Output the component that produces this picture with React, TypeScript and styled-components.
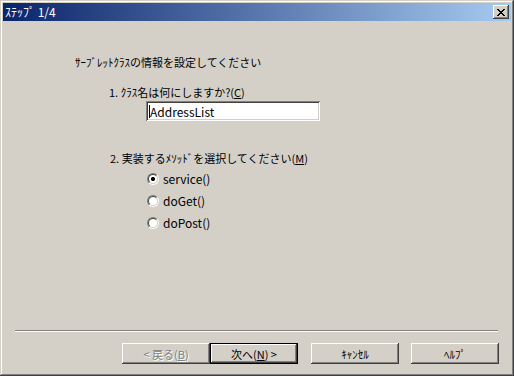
import React from "react"
import styled, { createGlobalStyle } from "styled-components"

const GlobalStyle = createGlobalStyle`
  html, body {
    margin: 0;
    padding: 0;
    background: #d4d0c8;
  }
  body {
    font-family: "Noto Sans CJK JP", "Noto Sans", sans-serif;
  }
`

const Window = styled.div`
  width: 514px;
  height: 376px;
  box-sizing: border-box;
  padding: 3px;
  display: flex;
  flex-direction: column;
  background: #d4d0c8;
  box-shadow: inset -1px -1px #404040, inset 1px 1px #d4d0c8,
    inset -2px -2px #808080, inset 2px 2px #ffffff;
  font-size: 11px;
  color: #000;
`

const TitleBar = styled.div`
  height: 18px;
  display: flex;
  align-items: center;
  justify-content: space-between;
  padding: 0 2px 0 2px;
  background: linear-gradient(to right, #0a246a, #a6caf0);
`

const TitleText = styled.span`
  color: #fff;
  font-size: 12px;
  line-height: 14px;
`

const CloseButton = styled.div`
  width: 16px;
  height: 14px;
  box-sizing: border-box;
  display: flex;
  align-items: center;
  justify-content: center;
  background: #d4d0c8;
  box-shadow: inset -1px -1px #404040, inset 1px 1px #ffffff,
    inset -2px -2px #808080, inset 2px 2px #d4d0c8;
`

const Body = styled.div`
  flex: 1;
  display: flex;
  flex-direction: column;
`

const Content = styled.div`
  display: flex;
  flex-direction: column;
  padding: 34px 0 0 72px;
`

const Label = styled.div<{ $indent?: number; $top?: number }>`
  line-height: 14px;
  height: 14px;
  white-space: nowrap;
  margin-left: ${({ $indent }) => $indent ?? 0}px;
  margin-top: ${({ $top }) => $top ?? 0}px;
`

const TextField = styled.div`
  width: 174px;
  height: 20px;
  box-sizing: border-box;
  margin: 2px 0 0 71px;
  padding: 0 3px;
  display: flex;
  align-items: center;
  background: #fff;
  box-shadow: inset 1px 1px #808080, inset -1px -1px #ffffff,
    inset 2px 2px #404040, inset -2px -2px #d4d0c8;
  font-size: 12px;
`

const Caret = styled.span`
  width: 1px;
  height: 13px;
  background: #000;
`

const RadioList = styled.div`
  display: flex;
  flex-direction: column;
  margin: 3px 0 0 72px;
`

const RadioRow = styled.div`
  height: 22px;
  display: flex;
  align-items: center;
  gap: 4px;
`

const RadioCircle = styled.span<{ $checked?: boolean }>`
  width: 12px;
  height: 12px;
  box-sizing: border-box;
  border-radius: 50%;
  border: 1px solid;
  border-color: #808080 #ffffff #ffffff #808080;
  display: flex;

  &::before {
    content: "";
    flex: 1;
    border-radius: 50%;
    border: 1px solid;
    border-color: #404040 #d4d0c8 #d4d0c8 #404040;
    background: ${({ $checked }) =>
      $checked
        ? "radial-gradient(circle, #000 0 2px, #fff 2.2px)"
        : "#fff"};
  }
`

const RadioText = styled.span`
  font-size: 12px;
  line-height: 14px;
`

const Separator = styled.div`
  height: 1px;
  margin: auto 13px 11px 12px;
  background: #808080;
  border-bottom: 1px solid #ffffff;
`

const ButtonRow = styled.div`
  display: flex;
  justify-content: flex-end;
  padding: 0 12px 9px 0;
`

const Button = styled.div<{ $default?: boolean; $disabled?: boolean; $gap?: number }>`
  width: 88px;
  height: 21px;
  box-sizing: border-box;
  margin-left: ${({ $gap }) => $gap ?? 0}px;
  display: flex;
  align-items: center;
  justify-content: center;
  background: #d4d0c8;
  line-height: 14px;
  white-space: pre;
  color: ${({ $disabled }) => ($disabled ? "#808080" : "#000")};
  text-shadow: ${({ $disabled }) => ($disabled ? "1px 1px #ffffff" : "none")};
  box-shadow: ${({ $default }) =>
    $default
      ? "inset 0 0 0 1px #000, inset -2px -2px #404040, inset 2px 2px #ffffff, inset -3px -3px #808080"
      : "inset -1px -1px #404040, inset 1px 1px #ffffff, inset -2px -2px #808080, inset 2px 2px #d4d0c8"};
`

const CloseGlyph = () => (
  <svg width="8" height="7" viewBox="0 0 8 7" shapeRendering="crispEdges">
    <path
      fill="#000"
      d="M0 0h2v1H0zM6 0h2v1H6zM1 1h2v1H1zM5 1h2v1H5zM2 2h4v1H2zM3 3h2v1H3zM2 4h4v1H2zM1 5h2v1H1zM5 5h2v1H5zM0 6h2v1H0zM6 6h2v1H6z"
    />
  </svg>
)

const methods = [
  { name: "service()", checked: true },
  { name: "doGet()", checked: false },
  { name: "doPost()", checked: false },
]

const App = () => {
  return (
    <>
      <GlobalStyle />
      <Window>
        <TitleBar>
          <TitleText>ｽﾃｯﾌﾟ 1/4</TitleText>
          <CloseButton>
            <CloseGlyph />
          </CloseButton>
        </TitleBar>
        <Body>
          <Content>
            <Label>ｻｰﾌﾞﾚｯﾄｸﾗｽの情報を設定してください</Label>
            <Label $indent={34} $top={16}>
              1. ｸﾗｽ名は何にしますか?(<u>C</u>)
            </Label>
            <TextField>
              <Caret />
              AddressList
            </TextField>
            <Label $indent={35} $top={30}>
              2. 実装するﾒｿｯﾄﾞを選択してください(<u>M</u>)
            </Label>
            <RadioList>
              {methods.map((m) => (
                <RadioRow key={m.name}>
                  <RadioCircle $checked={m.checked} />
                  <RadioText>{m.name}</RadioText>
                </RadioRow>
              ))}
            </RadioList>
          </Content>
          <Separator />
          <ButtonRow>
            <Button $disabled>&lt; 戻る(<u>B</u>)</Button>
            <Button $default>
              次へ(<u>N</u>) &gt;
            </Button>
            <Button $gap={13}>ｷｬﾝｾﾙ</Button>
            <Button $gap={12}>ﾍﾙﾌﾟ</Button>
          </ButtonRow>
        </Body>
      </Window>
    </>
  )
}

export default App
